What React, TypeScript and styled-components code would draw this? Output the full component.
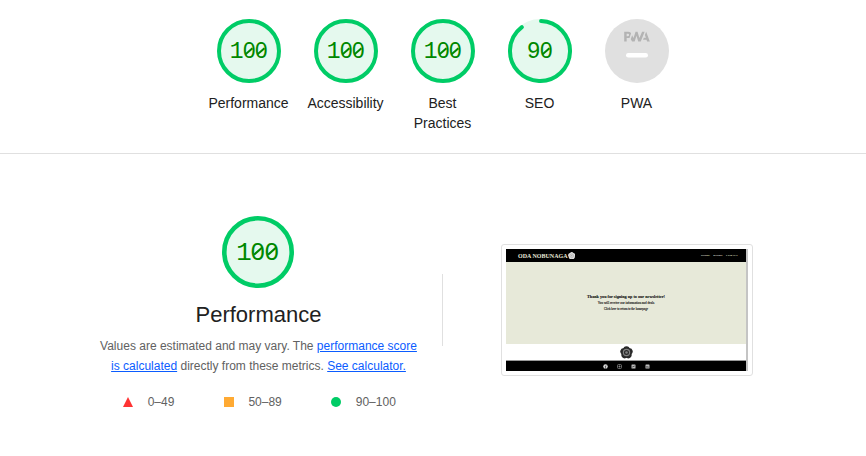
import React from "react";
import styled, { createGlobalStyle, css } from "styled-components";

const GlobalStyle = createGlobalStyle`
  * { box-sizing: border-box; }
  body {
    margin: 0;
    background: #fff;
    color: #212121;
    font-family: "Liberation Sans", Arial, sans-serif;
    overflow: hidden;
  }
`;

const Page = styled.main`
  width: 866px;
  height: 456px;
`;

const ScoresHeader = styled.header`
  display: flex;
  justify-content: center;
  height: 154px;
  padding: 19px 0 0 20px;
  border-bottom: 1px solid #e0e0e0;
`;

const GaugeItem = styled.div`
  display: flex;
  flex-direction: column;
  align-items: center;
  width: 97px;
`;

const GaugeLabel = styled.div`
  width: 84px;
  margin: 10px 1px 0 0;
  font-size: 14px;
  line-height: 20px;
  text-align: center;
`;

const Dial = styled.div<{ $size: number }>`
  display: grid;
  width: ${(p) => p.$size}px;
  height: ${(p) => p.$size}px;
  place-items: center;

  > * { grid-area: 1 / 1; }
  svg { display: block; width: 100%; height: 100%; }
`;

const Score = styled.div<{ $size: number }>`
  display: flex;
  align-items: baseline;
  font-size: ${(p) => p.$size * 0.34 + 1.3}px;
  line-height: 30px;
  color: #080;
`;

const DigitCell = styled.span`
  display: flex;
  justify-content: center;
  width: 0.54em;
`;

const slashedZero = css`
  position: relative;
  font-family: "Noto Sans", sans-serif;
  font-size: 0.93em;
  transform: scaleX(1.06);

  &::after {
    content: "";
    position: absolute;
    left: 50%;
    top: calc(50% + 0.03em);
    width: 0.44em;
    height: 0.075em;
    background: currentColor;
    transform: translate(-50%, -50%) rotate(-43deg);
  }
`;

const Digit = styled.span<{ $zero: boolean }>`
  font-family: "Liberation Mono", monospace;
  line-height: 26px;
  ${(p) => p.$zero && slashedZero}
`;

function Gauge({ score, size, stroke = 4 }: { score: number; size: number; stroke?: number }) {
  const c = size / 2;
  const r = c - stroke / 2;
  const length = 2 * Math.PI * r;
  const arc = score === 100 ? length : (score / 100) * length - stroke / 2;
  return (
    <Dial $size={size}>
      <svg viewBox={`0 0 ${size} ${size}`}>
        <circle cx={c} cy={c} r={c} fill="#e5f9ee" />
        <circle
          cx={c}
          cy={c}
          r={r}
          fill="none"
          stroke="#0c6"
          strokeWidth={stroke}
          strokeLinecap="round"
          strokeDasharray={score === 100 ? undefined : `${arc} ${length}`}
          transform={`rotate(${score === 100 ? -90 : -88} ${c} ${c})`}
        />
      </svg>
      <Score $size={size}>
        {String(score).split("").map((d, i) => (
          <DigitCell key={i}><Digit $zero={d === "0"}>{d}</Digit></DigitCell>
        ))}
      </Score>
    </Dial>
  );
}

function PwaBadge() {
  return (
    <Dial $size={64}>
      <svg viewBox="0 0 60 60">
        <circle cx="30" cy="30" r="30" fill="#e0e0e0" />
        <g fill="#b3b3b3">
          <path d="M35.66 19.39l.7-1.75h2L37.4 15 38.6 12l3.4 9h-2.51l-.58-1.61z" />
          <path d="M33.52 21l3.65-9h-2.42l-2.5 5.82L30.5 12h-1.86l-1.9 5.82-1.35-2.65-1.21 3.72L25.4 21h2.38l1.72-5.2 1.64 5.2z" />
          <path fillRule="evenodd" d="M20.3 17.91h1.48c.45 0 .85-.05 1.2-.15l.39-1.18 1.07-3.3a2.64 2.64 0 0 0-.28-.37c-.55-.6-1.36-.91-2.42-.91H18v9h2.3V17.9zm1.96-3.84c.22.22.33.5.33.87 0 .36-.1.65-.29.87-.2.23-.59.35-1.15.35h-.86v-2.41h.87c.52 0 .89.1 1.1.32z" />
        </g>
        <rect x="19.7" y="31.8" width="20.6" height="4.2" rx="2.1" fill="#fff" />
      </svg>
    </Dial>
  );
}

const Category = styled.section`
  display: grid;
  grid-template-columns: 370px 424px;
  height: 302px;
  padding-left: 73px;
`;

const Overview = styled.div`
  display: flex;
  flex-direction: column;
  align-items: center;
  padding-top: 62px;
`;

const Title = styled.h1`
  margin: 11px 0 0 1px;
  font-size: 22px;
  font-weight: 400;
  line-height: 32px;
`;

const Description = styled.p`
  margin: 5px 0 0 1px;
  width: 322px;
  font-size: 12px;
  line-height: 20px;
  color: #616161;
  text-align: center;
`;

const Link = styled.a`
  color: #0b5cff;
  text-decoration: underline;
`;

const Legend = styled.div`
  display: flex;
  gap: 49.5px;
  margin-top: 16px;
  padding-left: 3px;
  font-size: 12px;
  line-height: 20px;
  color: #616161;
`;

const LegendEntry = styled.span`
  display: flex;
  align-items: center;
  gap: 14.5px;

  svg { display: block; width: 10px; height: 10px; }
`;

const PreviewColumn = styled.div`
  display: flex;
  align-items: flex-start;
  flex: 1;
  padding: 90px 0 0 58px;
`;

const Divider = styled.div`
  width: 1px;
  height: 72px;
  margin-top: 120px;
  margin-left: -1px;
  background: #e0e0e0;
`;

const Frame = styled.div`
  width: 252px;
  height: 132px;
  padding: 4px;
  border: 1px solid #e0e0e0;
  border-radius: 3px;
`;

const SplitArea = styled.div`
  display: flex;
`;

const Site = styled.div`
  width: 242px;
  height: 122px;
  display: grid;
  grid-template-columns: 240px 2px;
  grid-template-rows: 13px 82px 16px 11px;
  background: #c4c4c4;
  font-family: "Liberation Serif", serif;
  overflow: hidden;
`;

const SiteBar = styled.div`
  grid-column: 1;
  display: flex;
  align-items: center;
  justify-content: space-between;
  padding: 0 8px 0 12px;
  background: #000;
  color: #e8e9da;
`;

const Brand = styled.div`
  display: flex;
  align-items: center;
  font-size: 6px;
  font-weight: 700;
  line-height: 12px;
  white-space: nowrap;
`;

const SiteNav = styled.nav`
  display: flex;
  gap: 3.5px;
  font-size: 2.8px;
  font-weight: 700;
  line-height: 12px;
  color: #e4e4dc;
`;

const SiteMessage = styled.div`
  grid-column: 1;
  display: flex;
  flex-direction: column;
  align-items: center;
  padding-top: 31px;
  background: #e7e9d9;
  color: #111;
`;

const MessageLine = styled.div<{ $size: number; $strong?: boolean }>`
  height: ${(p) => (p.$strong ? 7 : 6)}px;
  font-size: ${(p) => p.$size}px;
  font-weight: ${(p) => (p.$strong ? 700 : 400)};
  line-height: ${(p) => (p.$strong ? 7 : 6)}px;
  white-space: nowrap;
  -webkit-text-stroke: 0.1px currentColor;
`;

const EmblemStrip = styled.div`
  grid-column: 1;
  display: flex;
  align-items: center;
  justify-content: center;
  background: #fff;
`;

const SiteFooter = styled.div`
  grid-column: 1;
  display: flex;
  align-items: center;
  justify-content: center;
  gap: 9px;
  background: #000;
  border-top: 1px solid #999;

  svg { width: 5px; height: 5px; }
`;

function Emblem({ size, light }: { size: number; light?: boolean }) {
  const petal = light ? "#e0e0e0" : "#292929";
  const inner = light ? "#a8a8a8" : "#808080";
  return (
    <svg width={size} height={size} viewBox="-10 -10 20 20">
      {[0, 72, 144, 216, 288].map((a) => (
        <circle key={a} cx="0" cy="-5" r="4.8" fill={petal} transform={`rotate(${a})`} />
      ))}
      <circle r="8" fill={petal} />
      <circle r="4.8" fill="none" stroke={inner} strokeWidth="1.8" />
      <circle r="2" fill={inner} />
    </svg>
  );
}

function SitePreview() {
  return (
    <Frame>
      <Site>
        <SiteBar>
          <Brand>ODA NOBUNAGA<Emblem size={7.5} light /></Brand>
          <SiteNav><span>HOME</span><span>REIGN</span><span>LEGACY</span></SiteNav>
        </SiteBar>
        <SiteMessage>
          <MessageLine $size={4.2} $strong>Thank you for signing up to our newsletter!</MessageLine>
          <MessageLine $size={3.3}>You will receive our information and deals</MessageLine>
          <MessageLine $size={3}>Click here to return to the homepage</MessageLine>
        </SiteMessage>
        <EmblemStrip><Emblem size={13} /></EmblemStrip>
        <SiteFooter>
          <svg viewBox="0 0 10 10"><circle cx="5" cy="5" r="4.5" fill="#ddd" /><path d="M5 10V4.5Q5 3 6.5 3M3.5 5.5H6.5" stroke="#222" fill="none" /></svg>
          <svg viewBox="0 0 10 10"><rect x="1" y="1" width="8" height="8" rx="2" fill="none" stroke="#888" strokeWidth="1.5" /><circle cx="5" cy="5" r="2" fill="#888" /></svg>
          <svg viewBox="0 0 10 10"><rect x="1" y="1" width="8" height="8" rx="1" fill="#bbb" /><path d="M2.5 6L7.5 4" stroke="#333" strokeWidth="1.5" /></svg>
          <svg viewBox="0 0 10 10"><rect x="1" y="1" width="8" height="8" rx="1" fill="#bbb" /><path d="M3 4V7.5M5 4V7.5M7 5V7.5" stroke="#333" /></svg>
        </SiteFooter>
      </Site>
    </Frame>
  );
}

export default function App() {
  return (
    <Page>
      <GlobalStyle />
      <ScoresHeader>
        {[
          ["Performance", 100],
          ["Accessibility", 100],
          ["Best Practices", 100],
          ["SEO", 90],
        ].map(([label, score]) => (
          <GaugeItem key={label}>
            <Gauge score={Number(score)} size={64} />
            <GaugeLabel>{label}</GaugeLabel>
          </GaugeItem>
        ))}
        <GaugeItem>
          <PwaBadge />
          <GaugeLabel>PWA</GaugeLabel>
        </GaugeItem>
      </ScoresHeader>
      <Category>
        <Overview>
          <Gauge score={100} size={72} stroke={4.6} />
          <Title>Performance</Title>
          <Description>
            Values are estimated and may vary. The <Link>performance score is calculated</Link>{" "}
            directly from these metrics. <Link>See calculator.</Link>
          </Description>
          <Legend>
            <LegendEntry>
              <svg viewBox="0 0 10 10"><path d="M5 0L10 10H0Z" fill="#f33" /></svg>0–49
            </LegendEntry>
            <LegendEntry>
              <svg viewBox="0 0 10 10"><rect width="10" height="10" fill="#fa3" /></svg>50–89
            </LegendEntry>
            <LegendEntry>
              <svg viewBox="0 0 10 10"><circle cx="5" cy="5" r="5" fill="#0c6" /></svg>90–100
            </LegendEntry>
          </Legend>
        </Overview>
        <SplitArea>
          <Divider />
          <PreviewColumn><SitePreview /></PreviewColumn>
        </SplitArea>
      </Category>
    </Page>
  );
}
